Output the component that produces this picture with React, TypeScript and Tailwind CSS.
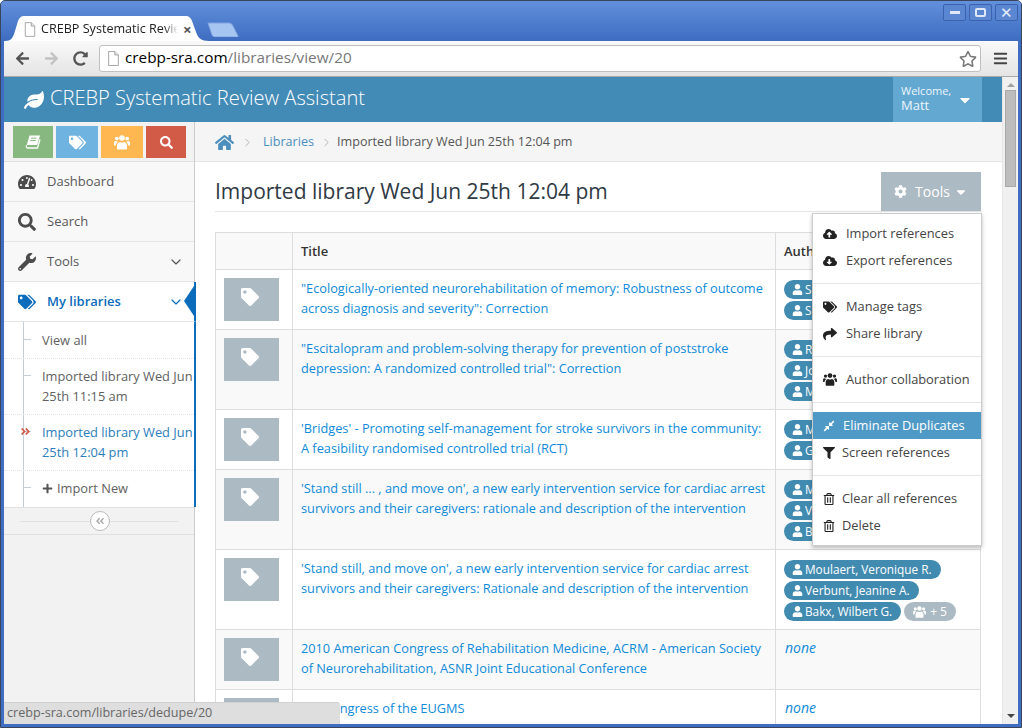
import { ReactNode } from 'react';
import {
  FaAngleDoubleLeft,
  FaAngleDoubleRight,
  FaBars,
  FaCaretDown,
  FaCloudDownloadAlt,
  FaCloudUploadAlt,
  FaCog,
  FaCompressAlt,
  FaFilter,
  FaHome,
  FaLeaf,
  FaPlus,
  FaRegStar,
  FaRegTrashAlt,
  FaSearch,
  FaShare,
  FaTachometerAlt,
  FaTag,
  FaTags,
  FaUser,
  FaWrench,
  FaArrowLeft,
  FaArrowRight,
  FaRedoAlt,
} from 'react-icons/fa';
import { ChevronDown, ChevronRight } from 'lucide-react';

const rows = [
  {
    h: 'h-[60px]',
    title: '"Ecologically-oriented neurorehabilitation of memory: Robustness of outcome across diagnosis and severity": Correction',
    authors: ['S', 'S'],
  },
  {
    h: 'h-[80px]',
    title: '"Escitalopram and problem-solving therapy for prevention of poststroke depression: A randomized controlled trial": Correction',
    authors: ['R', 'Jo', 'M'],
  },
  {
    h: 'h-[60px]',
    title: "'Bridges' - Promoting self-management for stroke survivors in the community: A feasibility randomised controlled trial (RCT)",
    authors: ['M', 'G'],
  },
  {
    h: 'h-[80px]',
    title: "'Stand still ... , and move on', a new early intervention service for cardiac arrest survivors and their caregivers: rationale and description of the intervention",
    authors: ['M', 'V', 'B'],
  },
  {
    h: 'h-[80px]',
    title: "'Stand still, and move on', a new early intervention service for cardiac arrest survivors and their caregivers: Rationale and description of the intervention",
    authors: ['Moulaert, Veronique R.', 'Verbunt, Jeanine A.', 'Bakx, Wilbert G.'],
    more: '+ 5',
  },
  {
    h: 'h-[60px]',
    title: '2010 American Congress of Rehabilitation Medicine, ACRM - American Society of Neurorehabilitation, ASNR Joint Educational Conference',
    authors: [],
  },
  {
    h: 'h-[60px]',
    title: '7th Congress of the EUGMS',
    authors: [],
  },
];

function FileIcon({ className }: { className?: string }) {
  return (
    <svg viewBox="0 0 14 17" className={className}>
      <path d="M1.5 .5h7l4 4v12h-11z" fill="#fff" stroke="#9a9a9a" />
      <path d="M8.5 .5v4h4" fill="#e8e8e8" stroke="#9a9a9a" />
    </svg>
  );
}

// the old FontAwesome group and book glyphs, not in the icon packs
function UsersIcon({ className }: { className?: string }) {
  return (
    <svg viewBox="0 0 16 15" fill="currentColor" className={className}>
      <circle cx="2.8" cy="3.6" r="1.9" />
      <circle cx="13.2" cy="3.6" r="1.9" />
      <circle cx="8" cy="3" r="2.8" />
      <path d="M3.6 14.6c-.4-.2-.6-.6-.6-1v-3c0-2 1.4-3.5 3-3.7.6.5 1.2.7 2 .7s1.400-.2 2-.7c1.600.2 3 1.700 3 3.700v3c0 .4-.2.8-.6 1z" />
      <path d="M0 10.500V7.800C0 6.700.7 6 1.500 6c.4.300.9.500 1.400.500.300 0 .600 0 .900-.200-.200.400-.300.700-.300 1-1 .700-1.800 2-1.800 3.200z" />
      <path d="M16 10.500V7.800C16 6.700 15.300 6 14.500 6c-.4.300-.900.500-1.400.500-.300 0-.600 0-.900-.200.200.400.300.700.300 1 1 .700 1.800 2 1.800 3.200z" />
    </svg>
  );
}

function BookIcon({ className }: { className?: string }) {
  return (
    <svg viewBox="0 0 16 16" className={className}>
      <path d="M4.500 1.500h10.500l-2.800 9.500H1.800z" fill="#fff" />
      <path d="M6 4.200h5.500M5.300 6.500h5.500" stroke="#87b87f" strokeWidth="1" />
      <path d="M1.800 11c-1 1.500-.5 3 1 3h9.700l2.500-8.500" fill="none" stroke="#fff" strokeWidth="1.300" />
    </svg>
  );
}

function NavRow({ icon, label, chevron }: { icon: ReactNode; label: string; chevron?: boolean }) {
  return (
    <div className="flex h-10 items-center border-b border-[#e5e5e5] bg-[#f8f8f8] text-[#585858]">
      <span className="flex w-[43px] justify-center pl-[3px] text-[18px] text-[#4c4c4c]">{icon}</span>
      <span className="flex-1">{label}</span>
      {chevron && <ChevronDown size={16} strokeWidth={1.75} className="mr-[10px] text-[#555]" />}
    </div>
  );
}

function SubItem({ children, active, dotted, h }: { children: ReactNode; active?: boolean; dotted?: boolean; h: string }) {
  return (
    <div className={`relative pl-[38px] pt-[7px] text-[12.85px] leading-5 ${h} ${dotted ? 'border-b border-dotted border-[#e4e4e4]' : ''} ${active ? 'text-[#2b7dbc]' : 'text-[#616161]'}`}>
      <span className="absolute left-[20px] top-[16px] h-px w-[7px] bg-[#c3cfd8]" />
      {active && <FaAngleDoubleRight className="absolute left-[16px] top-[11px] text-[11px] text-[#d15b47]" />}
      <div className="w-[156px]">{children}</div>
    </div>
  );
}

function MenuItem({ icon, label, active, gap = 'w-[23px]', size = 'text-[14px]' }: { icon: ReactNode; label: string; active?: boolean; gap?: string; size?: string }) {
  return (
    <div className={`flex h-[27px] items-center pl-[10px] text-[12.85px] ${active ? 'bg-[#4f99c6] text-white' : 'text-[#444]'}`}>
      <span className={`flex ${gap} ${size} shrink-0 ${active ? 'text-white' : 'text-[#222]'}`}>{icon}</span>
      <span className="whitespace-nowrap">{label}</span>
    </div>
  );
}

function Pill({ children, w }: { children: ReactNode; w?: string }) {
  return (
    <span className={`flex h-[19px] items-center rounded-full bg-[#428bb0] pl-[8px] pr-[9px] text-[11.8px] text-white ${w ?? 'w-fit'}`}>
      <FaUser className="mr-[2px] shrink-0 text-[11px]" />
      {children}
    </span>
  );
}

export default function App() {
  return (
    <div
      className="relative flex h-[728px] w-[1022px] flex-col overflow-hidden rounded-t-[5px] border border-[#39455a] bg-[#3f6dc2] text-[13px]"
      style={{ fontFamily: '"Open Sans", sans-serif' }}
    >
      {/* title bar */}
      <div className="relative h-10 shrink-0 bg-gradient-to-b from-[#6290dc] to-[#3e6cc0]">
        <svg viewBox="0 0 204 25" className="absolute left-[4px] top-[15px] h-[25px] w-[204px]">
          <path d="M0 25c6 0 8-3 10-10l3-10c1-3 3-5 6-5h162c3 0 5 2 6 5l4 11c2 6 5 9 13 9z" fill="#fff" />
        </svg>
        <svg viewBox="0 0 32 15" className="absolute left-[206px] top-[21px] h-[15px] w-[32px]">
          <path d="M1 1h21c2 0 3 1 4 3l5 10c0 .5 0 1-1 1H8c-1 0-2-.5-3-2z" fill="#a6c5f0" stroke="#7ea3e0" />
        </svg>
        <div className="absolute left-[23px] top-[19px] flex w-[170px] items-center">
          <FileIcon className="mr-[5px] h-[15px] w-[12px] shrink-0" />
          <span className="w-[137px] whitespace-nowrap text-[12.6px] text-[#222] [mask-image:linear-gradient(to_right,black_90%,transparent)]">
            CREBP Systematic Revie
          </span>
          <span className="ml-[5px] text-[15px] leading-none font-bold text-[#555]">×</span>
        </div>
        <div className="absolute right-[3px] top-[3px] flex gap-[3px]">
          {[
            <span key="a" className="h-[3px] w-[10px] bg-[#dfe8f7]" />,
            <span key="b" className="h-[9px] w-[11px] rounded-[2px] border-2 border-[#dfe8f7]" />,
            <span key="c" className="text-[15px] leading-none text-[#e6edf9]">✕</span>,
          ].map((glyph, i) => (
            <span key={i} className="flex h-[17px] w-[23px] items-center justify-center rounded-[2px] border border-[#3a62ad] bg-[#5a86d2]">
              {glyph}
            </span>
          ))}
        </div>
      </div>

      <div className="mx-[3px] flex min-h-0 flex-1 flex-col border-b-[3px] border-[#3f6dc2] bg-white">
        {/* browser toolbar */}
        <div className="flex h-[36px] shrink-0 items-center border-b border-[#a8a8a8] bg-gradient-to-b from-[#f9f9f9] to-[#e4e4e4]">
          <FaArrowLeft className="ml-[11px] text-[15px] text-[#555]" />
          <FaArrowRight className="ml-[14px] text-[15px] text-[#c2c2c2]" />
          <FaRedoAlt className="ml-[14px] text-[15px] text-[#555]" />
          <div className="ml-[11px] flex h-[27px] w-[882px] items-center rounded-[3px] border border-[#c0c0c0] bg-white">
            <FileIcon className="ml-[7px] mr-[5px] h-[15px] w-[13px]" />
            <span className="-mt-[2px] text-[15.3px] text-black">crebp-sra.com</span>
            <span className="-mt-[2px] text-[15.3px] text-[#777]">/libraries/view/20</span>
            <FaRegStar className="ml-auto mr-[3px] text-[18px] text-[#777]" />
          </div>
          <FaBars className="ml-[12px] text-[15px] text-[#444]" />
        </div>

        <div className="flex min-h-0 flex-1">
          <div className="flex min-w-0 flex-1 flex-col">
            {/* app header */}
            <div className="flex h-[45px] shrink-0 items-center bg-[#428bb6] text-white">
              <FaLeaf className="ml-[20px] mr-[6px] text-[20px]" />
              <span className="pb-[2px] text-[20.1px] font-light">CREBP Systematic Review Assistant</span>
              <div className="ml-auto mr-[20px] flex h-full w-[89px] items-center bg-[#62a8d1] pl-2">
                <div className="-mt-[2px] flex-1 text-[#eef6fb]">
                  <div className="text-[11px] leading-[14px]">Welcome,</div>
                  <div className="leading-[15px]">Matt</div>
                </div>
                <FaCaretDown className="mr-[9px] text-[16px]" />
              </div>
            </div>

            <div className="flex min-h-0 flex-1">
              {/* sidebar */}
              <div className="relative z-10 flex w-[191px] shrink-0 flex-col border-r border-[#cccccc] bg-[#f2f2f2]">
                <div className="flex h-10 shrink-0 gap-[3px] border-b border-[#e0e0e0] pl-[9px] pt-1">
                  <span className="flex h-8 w-10 items-center justify-center bg-[#87b87f] text-white"><BookIcon className="h-4 w-4" /></span>
                  <span className="flex h-8 w-[42px] items-center justify-center bg-[#6fb3e0] text-[17px] text-white"><FaTags /></span>
                  <span className="flex h-8 w-[42px] items-center justify-center bg-[#ffb752] text-white"><UsersIcon className="h-[15px] w-4" /></span>
                  <span className="flex h-8 w-10 items-center justify-center bg-[#d15b47] text-white"><FaSearch /></span>
                </div>
                <NavRow icon={<FaTachometerAlt />} label="Dashboard" />
                <NavRow icon={<FaSearch />} label="Search" />
                <NavRow icon={<FaWrench />} label="Tools" chevron />
                <div className="relative -mr-[2px] flex h-10 items-center border-b border-r-2 border-[#e5e5e5] border-r-[#0b6cbc] bg-white font-semibold text-[#0b6cbc]">
                  <span className="flex w-[43px] justify-center pl-[3px] text-[18px]"><FaTags /></span>
                  <span className="flex-1">My libraries</span>
                  <ChevronDown size={16} strokeWidth={1.75} className="mr-[10px]" />
                  <span className="absolute right-0 top-[4px] h-0 w-0 border-y-[15px] border-r-[10px] border-y-transparent border-r-[#0b6cbc]" />
                </div>
                <div className="relative -mr-[2px] border-r-2 border-[#0b6cbc] bg-white pt-px">
                  <span className="absolute bottom-0 left-[19px] top-0 w-px bg-[#c3cfd8]" />
                  <SubItem h="h-[36px]" dotted>View all</SubItem>
                  <SubItem h="h-[56px]" dotted>Imported library Wed Jun 25th 11:15 am</SubItem>
                  <SubItem h="h-[56px]" dotted active>Imported library Wed Jun 25th 12:04 pm</SubItem>
                  <SubItem h="h-[36px]"><FaPlus className="mr-1 inline align-[-1px] text-[11px] text-[#555]" />Import New</SubItem>
                </div>
                <div className="relative flex h-[28px] items-center border-y border-[#e0e0e0] px-4">
                  <span className="h-px flex-1 bg-[#e0e0e0]" />
                  <span className="absolute left-[86px] flex h-[20px] w-[20px] items-center justify-center rounded-full border border-[#bbbbbb] bg-white text-[10px] text-[#aaaaaa]">
                    <FaAngleDoubleLeft />
                  </span>
                </div>
              </div>

              {/* main content */}
              <div className="relative min-w-0 flex-1 overflow-hidden">
                <div className="flex h-10 items-center border-b border-[#e5e5e5] bg-[#f5f5f5] pl-5 pt-px text-[12.6px]">
                  <FaHome className="text-[19px] text-[#4c8fbd]" />
                  <ChevronRight size={13} strokeWidth={1.25} className="ml-[7px] mr-[9px] text-[#999]" />
                  <span className="text-[#4c8fbd]">Libraries</span>
                  <ChevronRight size={13} strokeWidth={1.25} className="ml-[6px] mr-[4px] text-[#999]" />
                  <span className="text-[#555]">Imported library Wed Jun 25th 12:04 pm</span>
                </div>
                <div className="px-5">
                  <div className="flex h-[50px] items-end justify-between border-b border-[#e5e5e5] pb-[4px]">
                    <h1 className="text-[21px] leading-8 text-[#2f3a44]">Imported library Wed Jun 25th 12:04 pm</h1>
                    <div className="mr-px mt-[10px] flex h-[39px] w-[100px] items-center justify-center self-start bg-[#abbac3] text-white">
                      <FaCog className="mr-[8px] text-[13px]" />
                      <span className="mr-[4px] text-[14px]">Tools</span>
                      <FaCaretDown className="text-[14px]" />
                    </div>
                  </div>
                  <table className="mt-5 w-[766px] table-fixed border-collapse">
                    <thead>
                      <tr className="h-[37px]">
                        <th className="w-[77px] border border-[#dddddd] bg-[#f9f9f9]" />
                        <th className="w-[483px] border border-[#dddddd] bg-[#f9f9f9] pl-2 pt-px text-left font-semibold text-[#333]">Title</th>
                        <th className="border border-[#dddddd] bg-[#f9f9f9] pl-2 pt-px text-left font-semibold text-[#333]">Authors</th>
                      </tr>
                    </thead>
                    <tbody>
                      {rows.map((row, i) => (
                        <tr key={i} className={`${row.h} ${i % 2 === 1 ? 'bg-[#f9f9f9]' : 'bg-white'}`}>
                          <td className="border border-[#dddddd] pl-2 pt-[8px] align-top">
                            <div className="flex h-[43px] w-[55px] items-center justify-center bg-[#abbac3] pb-[5px] pr-[4px] text-[18px] text-white">
                              <FaTag />
                            </div>
                          </td>
                          <td className="border border-[#dddddd] pl-2 pr-[4px] pt-[8px] align-top text-[12.75px] leading-5 text-[#0e8ad8]">
                            {row.title}
                          </td>
                          <td className="border border-[#dddddd] pl-2 pt-[10px] align-top">
                            {row.authors.length === 0 ? (
                              <em className="-mt-[2px] block pl-px text-[14px] leading-5 text-[#0e8ad8]">none</em>
                            ) : (
                              <div className="flex flex-col gap-[2px]">
                                {row.authors.map(a =>
                                  a === 'Bakx, Wilbert G.' ? (
                                    <div key={a} className="flex gap-[3px]">
                                      <Pill>{a}</Pill>
                                      <span className="flex h-[19px] items-center rounded-full bg-[#abbac3] px-[9px] text-[12px] text-white">
                                        <UsersIcon className="mr-[4px] h-[12px] w-[13px]" />
                                        {row.more}
                                      </span>
                                    </div>
                                  ) : (
                                    <Pill key={a + i} w={a.length < 3 ? 'w-[70px]' : undefined}>{a}</Pill>
                                  )
                                )}
                              </div>
                            )}
                          </td>
                        </tr>
                      ))}
                    </tbody>
                  </table>
                </div>

                {/* tools dropdown */}
                <div className="absolute left-[617px] top-[91px] w-[170px] border border-[#cccccc] bg-white py-[6px] shadow-[0_2px_4px_rgba(0,0,0,0.25)]">
                  <MenuItem icon={<FaCloudUploadAlt />} label="Import references" />
                  <MenuItem icon={<FaCloudDownloadAlt />} label="Export references" />
                  <div className="my-[9px] h-px bg-[#e5e5e5]" />
                  <MenuItem icon={<FaTags />} label="Manage tags" />
                  <MenuItem icon={<FaShare />} label="Share library" />
                  <div className="my-[9px] h-px bg-[#e5e5e5]" />
                  <MenuItem icon={<UsersIcon className="h-[13px] w-[14px]" />} label="Author collaboration" />
                  <div className="my-[9px] h-px bg-[#e5e5e5]" />
                  <MenuItem icon={<FaCompressAlt />} label="Eliminate Duplicates" active gap="w-[20px]" size="text-[12px]" />
                  <MenuItem icon={<FaFilter />} label="Screen references" gap="w-[19px]" size="text-[12px]" />
                  <div className="my-[9px] h-px bg-[#e5e5e5]" />
                  <MenuItem icon={<FaRegTrashAlt />} label="Clear all references" gap="w-[19px]" size="text-[12px]" />
                  <MenuItem icon={<FaRegTrashAlt />} label="Delete" gap="w-[19px]" size="text-[12px]" />
                </div>
              </div>
            </div>
          </div>

          {/* scrollbar */}
          <div className="flex w-4 shrink-0 flex-col items-center border-l border-[#e6e6e6] bg-[#f0f0f0]">
            <span className="mt-[6px] h-0 w-0 border-x-4 border-b-4 border-x-transparent border-b-[#a0a0a0]" />
            <span className="mt-[3px] h-[97px] w-[11px] border border-[#a8a8a8] bg-[#bdbdbd]" />
            <span className="mb-[6px] mt-auto h-0 w-0 border-x-4 border-t-4 border-x-transparent border-t-[#444]" />
          </div>
        </div>
      </div>

      {/* status bubble */}
      <div className="absolute bottom-[3px] left-[3px] z-20 flex h-[22px] w-[336px] items-center rounded-tr-[3px] border-t border-[#d0d0d0] bg-[#dedede] pl-[3px] text-[12.6px] text-[#666]">
        crebp-sra.com/libraries/dedupe/20
      </div>
    </div>
  );
}
